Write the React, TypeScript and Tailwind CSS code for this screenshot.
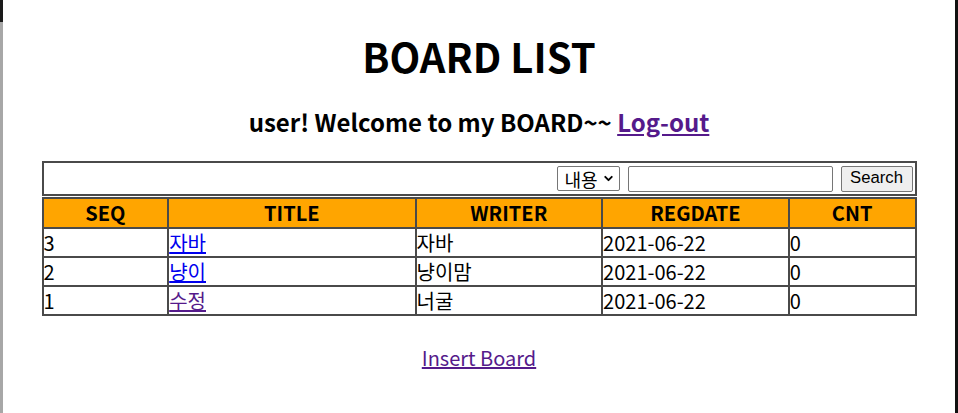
import { ChevronDown } from "lucide-react";

const rows = [
  { seq: 3, title: "자바", writer: "자바", regdate: "2021-06-22", cnt: 0, visited: false },
  { seq: 2, title: "냥이", writer: "냥이맘", regdate: "2021-06-22", cnt: 0, visited: false },
  { seq: 1, title: "수정", writer: "너굴", regdate: "2021-06-22", cnt: 0, visited: true },
];

const cols = [
  { label: "SEQ", w: "w-[126px]" },
  { label: "TITLE", w: "w-[248px]" },
  { label: "WRITER", w: "w-[187px]" },
  { label: "REGDATE", w: "w-[187px]" },
  { label: "CNT", w: "w-[127px]" },
];

const kr = "font-['Noto_Sans_CJK_KR',sans-serif]";

export default function App() {
  return (
    <div className={`flex h-[413px] w-[958px] bg-white text-black ${kr}`}>
      <div className="flex w-[3px] flex-col bg-[#a7a7a7]">
        <div className="h-[22px] bg-[#1a1a1a]" />
      </div>
      <main className="flex flex-1 flex-col items-center">
        <h1 className="mt-[27px] text-[40px] font-bold leading-[58px]">BOARD LIST</h1>
        <h3 className="mt-[22px] text-[24px] font-bold leading-[30px]">
          user! Welcome to my BOARD~~{" "}
          <a href="#" className="text-[#551a8b] underline">Log-out</a>
        </h3>

        <table className="mt-[24px] w-[875px] border-collapse border-2 border-[#4a4a4a]">
          <tbody>
            <tr>
              <td className="h-[33px] px-[2px] text-right">
                <form className="flex items-center justify-end gap-[8px]">
                  <div className="flex h-[25px] items-center gap-[4px] rounded-[2px] border border-[#767676] bg-white pl-[6px] pr-[4px] text-[18px] leading-none">
                    <span>내용</span>
                    <ChevronDown className="h-[13px] w-[13px]" strokeWidth={3.5} />
                  </div>
                  <input
                    className="h-[26px] w-[205px] rounded-[2px] border border-[#767676] px-[3px] font-['Liberation_Sans',sans-serif] text-[16px]"
                    type="text"
                  />
                  <button
                    type="button"
                    className="h-[26px] w-[72px] rounded-[2px] border border-[#767676] bg-[#efefef] font-['Liberation_Sans',sans-serif] text-[16.7px] leading-none"
                  >
                    Search
                  </button>
                </form>
              </td>
            </tr>
          </tbody>
        </table>

        <table className="mt-px w-[875px] border-collapse border-2 border-[#4a4a4a] text-[20px]">
          <thead>
            <tr className="bg-[#ffa500]">
              {cols.map((c) => (
                <th key={c.label} className={`${c.w} h-[30px] border-2 border-[#4a4a4a] p-0 text-[20px] font-bold leading-none`}>
                  {c.label}
                </th>
              ))}
            </tr>
          </thead>
          <tbody>
            {rows.map((r) => (
              <tr key={r.seq}>
                <td className="h-[29px] border-2 border-[#4a4a4a] p-0 leading-none">{r.seq}</td>
                <td className="border-2 border-[#4a4a4a] p-0 leading-none">
                  <a href="#" className={`underline ${r.visited ? "text-[#551a8b]" : "text-[#0000ee]"}`}>
                    {r.title}
                  </a>
                </td>
                <td className="border-2 border-[#4a4a4a] p-0 leading-none">{r.writer}</td>
                <td className="border-2 border-[#4a4a4a] p-0 leading-none">{r.regdate}</td>
                <td className="border-2 border-[#4a4a4a] p-0 leading-none">{r.cnt}</td>
              </tr>
            ))}
          </tbody>
        </table>

        <a href="#" className="mt-[29px] text-[20px] leading-[26px] text-[#551a8b] underline">
          Insert Board
        </a>
      </main>
      <div className="w-[3px] bg-[#111]" />
    </div>
  );
}
